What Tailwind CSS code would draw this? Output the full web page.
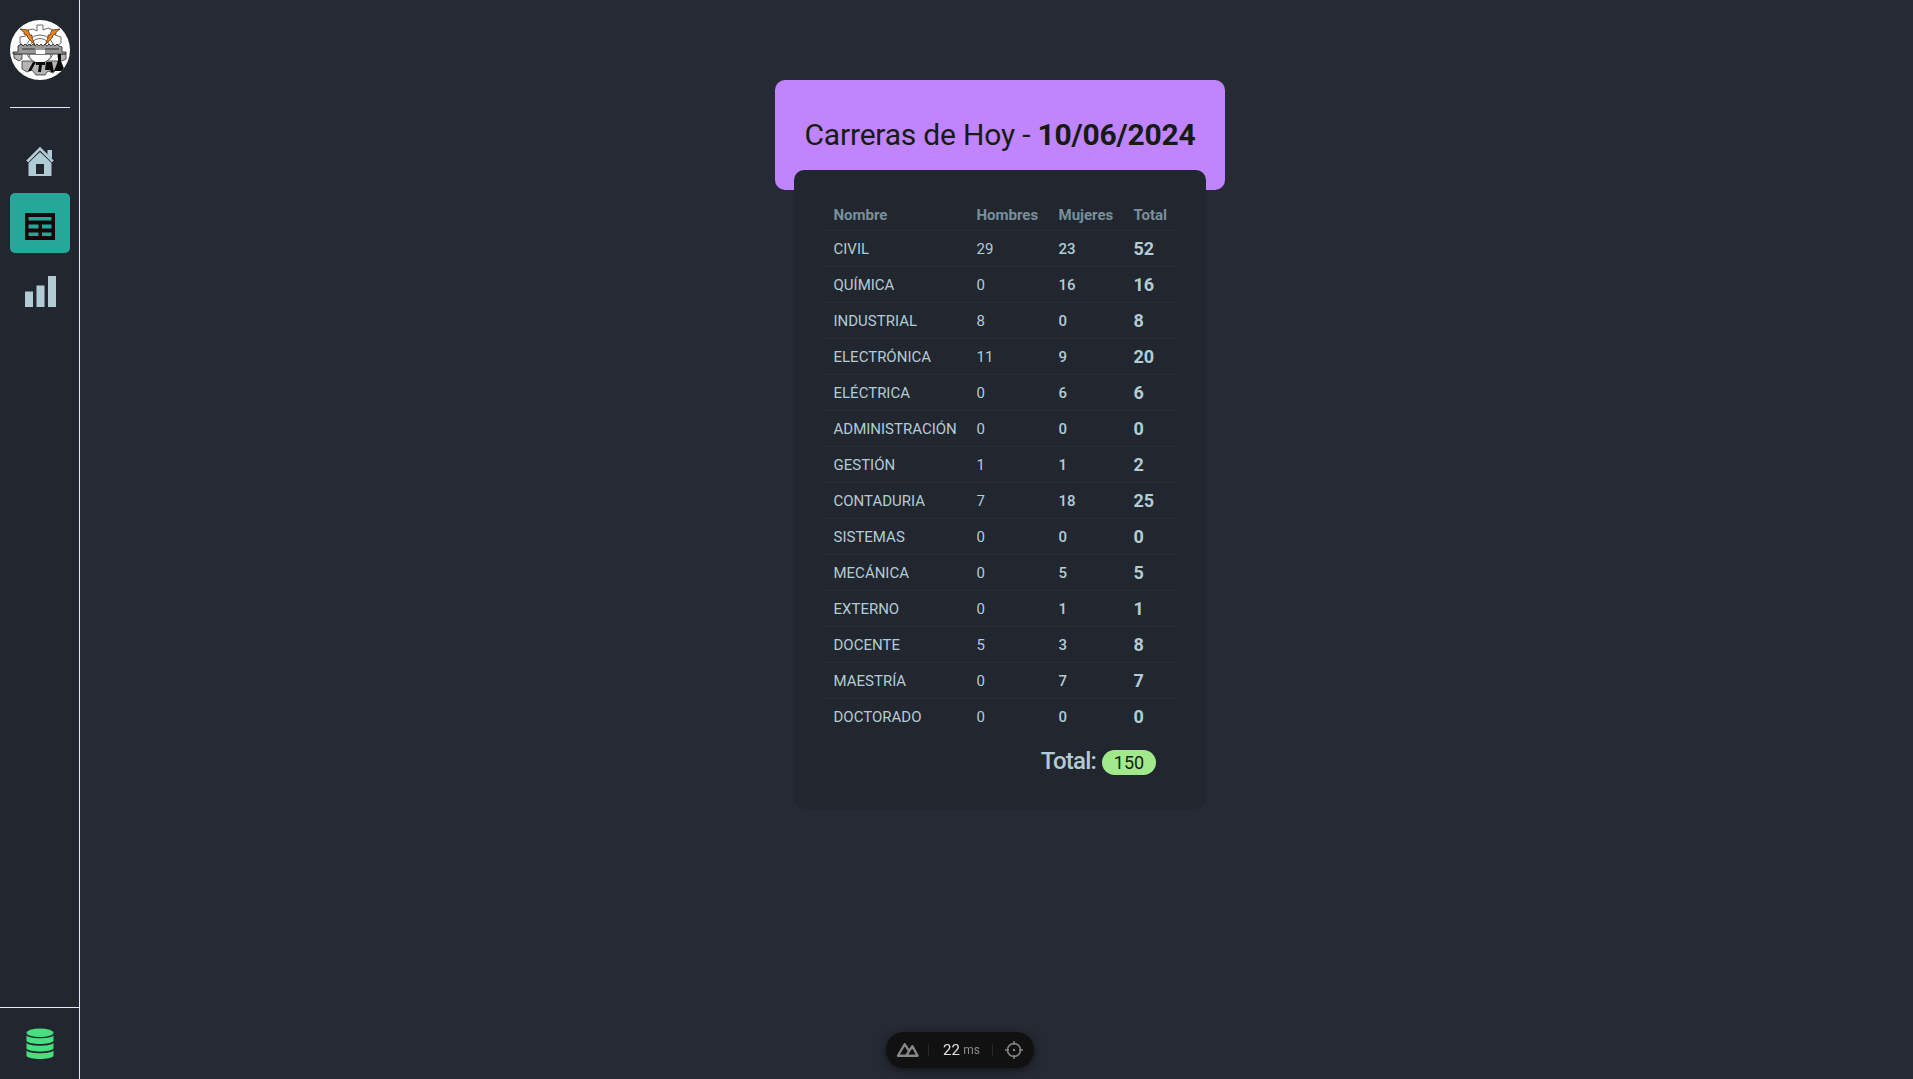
<!DOCTYPE html>
<html lang="es">
<head>
<meta charset="utf-8">
<title>Carreras de Hoy</title>
<script src="https://cdn.jsdelivr.net/npm/@tailwindcss/browser@4"></script>
</head>
<body class="flex h-screen overflow-hidden bg-[#262a34] font-['Roboto',sans-serif] text-[#b2ccd6]">
<aside class="flex w-20 shrink-0 flex-col border-r border-[#e5e7ff] bg-[#22262e]">
  <div class="flex flex-1 flex-col items-center">
    <div class="mt-5 size-[60px] overflow-hidden rounded-full bg-white">
      <svg viewBox="0 0 60 60" class="size-full">
        <g fill="#fff" stroke="#444" stroke-width=".8">
          <path d="M14 26l-4-3v-6l6-1 2-6 5-1 4 2V5h6v5l5-2 5 2 2 5 6 2v6l-4 3"/>
          <circle cx="30" cy="29" r="14"/><circle cx="30" cy="29" r="10.500"/>
        </g>
        <g fill="#b4b4b4" stroke="#333" stroke-width=".8">
          <path d="M12 41v8l5 3 5-2 4 5h9l3-4 5 2 5-5v-7z"/>
          <path d="M4 34h8v5l-3 2-5-3zM48 34h8v5l-4 2-4-3z"/>
        </g>
        <path d="M19 34a11 9 0 0 0 22 0z" fill="#fff" stroke="#555" stroke-width=".8"/>
        <path fill="#999" stroke="#222" stroke-width=".8" d="M8 26l3-2 2 2 2-2 2 2 2-2 2 2 2-2 2 2 2-2 2 2 2-2 2 2 2-2 2 2 2-2 2 2 2-2 2 2 2-2 2 2 3 1v5h4v2H3v-2h5z"/>
        <path d="M12 29h13m10 0h14" fill="none" stroke="#222" stroke-width=".9"/>
        <path d="M26 30h9v4h-9z" fill="#fff"/>
        <path d="M10 9l8 1 2 5h2v3l3 7-7-7-1-3-3-1v-2zM50 9l-8 1-2 5h-2v3l-3 7 7-7 1-3 3-1v-2z" fill="#f6821a" stroke="#51331b" stroke-width=".8"/>
        <path d="M23 42h3l-5 9h-3zM26 42h9v3h-3l-1 7h-3l1-7h-3zM36 42h6l2 10h-3l-1-2h-5zM48 34h3v7l4 10H44l4-10z" fill="#0a0a0a"/>
      </svg>
    </div>
    <div class="mt-[27px] h-px w-[60px] bg-[#e5e7ff]"></div>
    <nav class="mt-[25px] flex flex-col gap-2">
      <a class="flex h-[52px] w-[60px] items-center justify-center pt-1">
        <svg viewBox="0 0 28 30" class="h-[30px] w-7 overflow-visible" fill="#b2ccd6"><path d="M2.500 16.500 14 6l11.500 10.500V30h-23z"/><path d="M10 18h8v10h-8z" fill="#22262e"/><path d="M.6 15.500 14 2l13.400 13.500" fill="none" stroke="#22262e" stroke-width="5"/><path d="M21.500 4H26v9l-4.500-4.500z"/><path d="M1.200 15.500 14 2.500l12.800 13" fill="none" stroke="#b2ccd6" stroke-width="2.600"/></svg>
      </a>
      <a class="flex size-[60px] items-end justify-center rounded-[5px] bg-[#27a69a] pb-[13px]">
        <svg viewBox="0 0 30 27" class="h-[27px] w-[30px]"><path fill="#160808" fill-rule="evenodd" d="M0 0h30v27H0zM3.500 4h23v3.500h-23zM3.500 11.500h10v4h-10zM17 11.500h9.500v4H17zM3.500 19.500h10V23h-10zM17 19.500h9.500V23H17z"/></svg>
      </a>
      <a class="flex size-[60px] items-center justify-center pt-px pl-px">
        <svg viewBox="0 0 31 31" class="size-[31px]" fill="#b2ccd6"><path d="M0 15.500h8V31H0zM11.500 9.500h8V31h-8zM23 0h8v31h-8z"/></svg>
      </a>
    </nav>
  </div>
  <div class="flex h-[72px] justify-center border-t border-[#e5e7ff] pt-5">
    <svg viewBox="0 0 28 32" class="h-8 w-7" fill="#4ade80"><ellipse cx="14" cy="4.800" rx="13.500" ry="4.300"/><path d="M.5 7.500C4 11.200 24 11.200 27.500 7.500V13C25 17 3 17 .5 13zM.5 15C4 18.700 24 18.700 27.500 15v5.500C25 24.500 3 24.500.5 20.500zM.5 22.500C4 26.200 24 26.200 27.500 22.500V28C25 32 3 32 .5 28z"/></svg>
  </div>
</aside>
<main class="flex flex-1 flex-col items-center pt-20 pl-[7px]">
  <header class="flex h-[110px] w-[450px] justify-center rounded-[10px] bg-[#c084fc] pt-[35px] text-[30px] leading-10 whitespace-nowrap text-[#161c12]"><h1><span class="tracking-[-0.2px]">Carreras de Hoy - </span><b class="tracking-[-0.2px]">10/06/2024</b></h1></header>
  <section class="relative -mt-5 h-[639px] w-[412px] rounded-[10px] bg-[#22262e] px-[30px] pt-[30px] text-[15px]">
    <table class="w-[352px] table-fixed border-collapse text-left [&_td]:px-[9.5px] [&_td]:pt-0.5 [&_td]:pb-0 [&_th]:px-[9.5px] [&_th]:pt-px [&_th]:pb-0 [&_td:nth-child(3)]:font-medium [&_td:nth-child(4)]:text-lg [&_td:nth-child(4)]:font-bold [&_tbody_tr]:h-9 [&_tr]:border-b [&_tr]:border-[#292e39] [&_tr:last-child]:border-b-0">
      <colgroup><col class="w-[143px]"><col class="w-[82px]"><col class="w-[75px]"><col></colgroup>
      <thead><tr class="h-[30px] border-b! text-[#78909c]"><th>Nombre</th><th>Hombres</th><th>Mujeres</th><th>Total</th></tr></thead>
      <tbody>
        <tr><td>CIVIL</td><td>29</td><td>23</td><td>52</td></tr>
        <tr><td>QUÍMICA</td><td>0</td><td>16</td><td>16</td></tr>
        <tr><td>INDUSTRIAL</td><td>8</td><td>0</td><td>8</td></tr>
        <tr><td>ELECTRÓNICA</td><td>11</td><td>9</td><td>20</td></tr>
        <tr><td>ELÉCTRICA</td><td>0</td><td>6</td><td>6</td></tr>
        <tr><td>ADMINISTRACIÓN</td><td>0</td><td>0</td><td>0</td></tr>
        <tr><td>GESTIÓN</td><td>1</td><td>1</td><td>2</td></tr>
        <tr><td>CONTADURIA</td><td>7</td><td>18</td><td>25</td></tr>
        <tr><td>SISTEMAS</td><td>0</td><td>0</td><td>0</td></tr>
        <tr><td>MECÁNICA</td><td>0</td><td>5</td><td>5</td></tr>
        <tr><td>EXTERNO</td><td>0</td><td>1</td><td>1</td></tr>
        <tr><td>DOCENTE</td><td>5</td><td>3</td><td>8</td></tr>
        <tr><td>MAESTRÍA</td><td>0</td><td>7</td><td>7</td></tr>
        <tr><td>DOCTORADO</td><td>0</td><td>0</td><td>0</td></tr>
      </tbody>
    </table>
    <div class="mt-[11px] flex items-center justify-end gap-1.5 pr-5"><span class="text-2xl font-medium tracking-[-0.8px]">Total:</span><span class="mt-[3px] flex h-[25px] w-[54px] items-center justify-center rounded-full bg-[#a0ea8b] text-lg text-[#161c12]">150</span></div>
  </section>
</main>
<div class="fixed bottom-[11px] left-[886px] flex h-9 w-[148px] items-center rounded-full bg-[#111] px-2.5 shadow-[0_2px_8px_#0008]">
  <svg viewBox="0 0 24 16" class="h-4 w-6" fill="none" stroke="#898989" stroke-width="2.400" stroke-linejoin="round"><path d="M11 14H2L9 2l4.500 7M10.500 14 17 4l5.500 10z"/></svg>
  <span class="ml-[9px] h-3 w-px bg-[#292929]"></span>
  <span class="ml-3.5 w-[19px] text-[15px] text-[#e0e0e0]">22</span><span class="ml-0.5 text-xs text-[#8c8c8c]">ms</span>
  <span class="ml-3 h-3 w-px bg-[#292929]"></span>
  <svg viewBox="0 0 20 20" class="ml-[11px] size-5 shrink-0" fill="none" stroke="#858585" stroke-width="1.500"><circle cx="10" cy="10" r="6.500"/><path d="M10 1v4M10 15v4M1 10h4M15 10h4"/><circle cx="10" cy="10" r="1.200" fill="#858585" stroke="none"/></svg>
</div>
</body>
</html>
